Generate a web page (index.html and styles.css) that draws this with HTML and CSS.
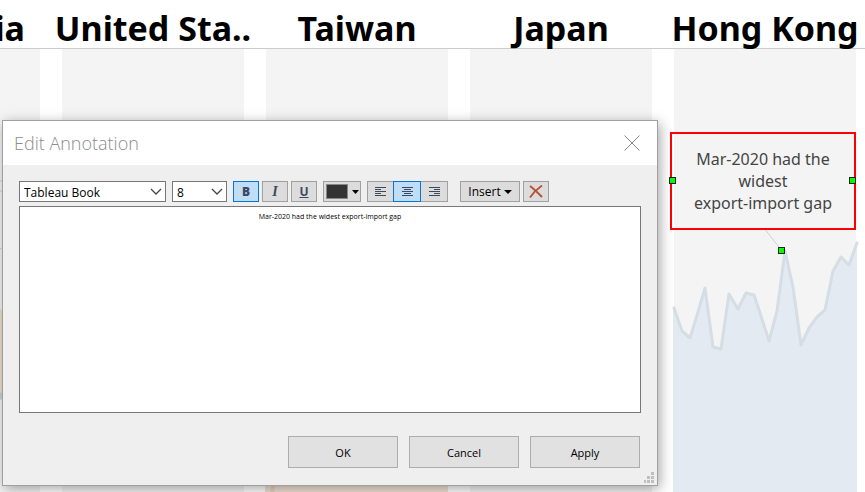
FILE: index.html
```html
<!DOCTYPE html>
<html lang="en">
<head>
<meta charset="utf-8">
<title>Edit Annotation</title>
<link rel="stylesheet" href="styles.css">
</head>
<body>
<main class="sheet">
  <header class="headers">
    <span class="header header-cut">ia</span>
    <span class="header">United Sta..</span>
    <span class="header">Taiwan</span>
    <span class="header">Japan</span>
    <span class="header">Hong Kong</span>
  </header>
  <div class="panes">
    <div class="pane">
      <svg class="chart" viewBox="0 0 40 443" preserveAspectRatio="none" aria-hidden="true">
        <path d="M0 259L4 264V346H0Z" fill="#f1dfd0"/>
        <path d="M0 132H3V142H0M0 200L4 198" fill="none" stroke="#cfcfcf"/>
        <path d="M0 347H4" stroke="#c8d4e0" stroke-width="7"/>
      </svg>
    </div>
    <div class="pane"></div>
    <div class="pane">
      <svg class="chart" viewBox="0 0 182 443" preserveAspectRatio="none" aria-hidden="true">
        <path d="M-1 430H182V443H-1Z" fill="#f1e1d3"/>
        <path d="M6 443L9 430" stroke="#e8d2c0" stroke-width="4"/>
      </svg>
    </div>
    <div class="pane"></div>
    <div class="pane">
      <svg class="chart" viewBox="0 0 182 443" preserveAspectRatio="none" aria-hidden="true">
        <path d="M-1 259L8 282L16 289L24 263L31 239L39 298L47 300L55 245L64 260L72 244L80 246L88 270L95 292L103 262L111 202L119 238L127 296L135 279L143 268L151 261L159 222L167 208L175 216L183 194V443H-1Z" fill="#e3eaf2"/>
        <path d="M0 259L8 282L16 289L24 263L31 239L39 298L47 300L55 245L64 260L72 244L80 246L88 270L95 292L103 262L111 202L119 238L127 296L135 279L143 268L151 261L159 222L167 208L175 216L183 194" fill="none" stroke="#d5dee5" stroke-width="3" stroke-linejoin="round" stroke-linecap="round"/>
        <path d="M90 179L108 202" stroke="#d0d0d0"/>
      </svg>
      <div class="note">
        <p class="note-text">Mar-2020 had the widest<br>export-import gap</p>
        <i class="handle handle-left"></i>
        <i class="handle handle-right"></i>
        <i class="handle handle-point"></i>
      </div>
    </div>
  </div>
</main>

<form class="dialog" role="dialog" aria-labelledby="dialog-title">
  <div class="titlebar">
    <h1 class="title" id="dialog-title">Edit Annotation</h1>
    <button class="close" type="button" aria-label="Close">
      <svg width="16" height="16" viewBox="0 0 16 16"><path d="M0.500 0.500L15.500 15.500M15.500 0.500L0.500 15.500" stroke="#888" fill="none"/></svg>
    </button>
  </div>
  <div class="body">
    <div class="toolbar">
      <span class="picker picker-font">
        <select class="select" aria-label="Font"><option>Tableau Book</option></select>
        <svg class="chevron" width="12" height="7" viewBox="0 0 12 7"><path d="M1 1L6 6L11 1" fill="none" stroke="#444" stroke-width="1.300"/></svg>
      </span>
      <span class="picker picker-size">
        <select class="select" aria-label="Font size"><option>8</option></select>
        <svg class="chevron" width="12" height="7" viewBox="0 0 12 7"><path d="M1 1L6 6L11 1" fill="none" stroke="#444" stroke-width="1.300"/></svg>
      </span>
      <div class="group">
        <button class="tool glyph active" type="button" aria-label="Bold" aria-pressed="true"><b>B</b></button>
        <button class="tool glyph" type="button" aria-label="Italic"><i class="italic">I</i></button>
        <button class="tool glyph" type="button" aria-label="Underline"><u>U</u></button>
      </div>
      <button class="tool color" type="button" aria-label="Text color">
        <span class="swatch"></span>
        <svg width="7" height="4" viewBox="0 0 7 4"><path d="M0 0H7L3.500 4Z"/></svg>
      </button>
      <div class="aligns">
        <button class="tool align" type="button" aria-label="Align left"><svg width="11" height="9" viewBox="0 0 11 9"><path d="M0 .5H11M0 2.500H6M0 4.500H11M0 6.500H6M0 8.500H11" stroke="#3b4a60"/></svg></button>
        <button class="tool align active" type="button" aria-label="Align center" aria-pressed="true"><svg width="11" height="9" viewBox="0 0 11 9"><path d="M0 .5H11M2 2.500H9M0 4.500H11M2 6.500H9M0 8.500H11" stroke="#3b4a60"/></svg></button>
        <button class="tool align" type="button" aria-label="Align right"><svg width="11" height="9" viewBox="0 0 11 9"><path d="M0 .5H11M5 2.500H11M0 4.500H11M5 6.500H11M0 8.500H11" stroke="#3b4a60"/></svg></button>
      </div>
      <div class="group inserts">
        <button class="tool insert" type="button">Insert <svg width="8" height="4" viewBox="0 0 8 4"><path d="M0 0H8L4 4Z"/></svg></button>
        <button class="tool glyph" type="button" aria-label="Clear"><svg width="14" height="13" viewBox="0 0 14 13"><path d="M1 1C5 4 9 8 13 12" fill="none" stroke="#b5533a" stroke-width="2"/><path d="M13 0.500C8 4 4 8 1 12.500" fill="none" stroke="#b5533a" stroke-width="1.800"/></svg></button>
      </div>
    </div>
    <textarea class="editor" aria-label="Annotation text" spellcheck="false">Mar-2020 had the widest export-import gap</textarea>
    <div class="actions">
      <button class="action" type="button">OK</button>
      <button class="action" type="button">Cancel</button>
      <button class="action" type="button">Apply</button>
    </div>
  </div>
  <svg class="grip" width="10" height="11" viewBox="0 0 10 11" aria-hidden="true"><path d="M7 0h3v3h-3zM3 4h3v3h-3zM7 4h3v3h-3zM0 8h2v3h-2zM3 8h3v3h-3zM7 8h3v3h-3z" fill="#bfbfbf"/></svg>
</form>
</body>
</html>
```
FILE: styles.css
```css
* { box-sizing: border-box; }

body {
  margin: 0;
  background: #fff;
  color: #000;
  font-family: "Open Sans", "Noto Sans", sans-serif;
  overflow: hidden;
}

button, select, textarea { font-family: inherit; color: inherit; margin: 0; }

.sheet { display: flex; flex-direction: column; height: 100vh; }

.headers, .panes {
  display: grid;
  grid-template-columns: 40px repeat(4, minmax(0, 1fr));
  column-gap: 22px;
  padding-right: 9px;
}

.headers { height: 49px; border-bottom: 1px solid #ccc; }

.header {
  display: flex;
  justify-content: center;
  font-family: "Noto Sans", sans-serif;
  font-size: 34px;
  font-weight: 700;
  line-height: 56px;
  white-space: nowrap;
}

.header-cut { justify-content: flex-end; padding-right: 15px; }

.panes { flex: 1; }
.pane { position: relative; background: #f4f4f4; }
.chart { display: block; width: 100%; height: 443px; overflow: visible; }

.note {
  position: absolute;
  top: 83px;
  left: -4px;
  right: 0;
  height: 98px;
  display: flex;
  align-items: center;
  justify-content: center;
  border: 2px solid #f00;
}

.note-text {
  width: 144px;
  margin: 0;
  color: #444;
  font-family: "Noto Sans", sans-serif;
  font-size: 16px;
  line-height: 22px;
  text-align: center;
}

.handle {
  position: absolute;
  width: 7px;
  height: 7px;
  background: #0f0;
  border: 1px solid #222;
}

.handle-left { left: -3px; top: 43px; }
.handle-right { right: -2px; top: 43px; }
.handle-point { left: 106px; top: 113px; }

.dialog {
  position: absolute;
  top: 120px;
  left: 2px;
  right: 207px;
  background: #efefef;
  border: 1px solid #a0a0a0;
  box-shadow: 2px 3px 12px rgba(0, 0, 0, 0.35);
}

.titlebar {
  display: flex;
  align-items: center;
  justify-content: space-between;
  height: 44px;
  padding: 0 17px 0 11px;
  background: #fff;
}

.title { margin: 0; color: #8c8c8c; font-size: 18px; font-weight: 300; }
.close { display: flex; padding: 0; border: 0; background: none; }
.body { padding: 16px 16px 17px; }
.toolbar { display: flex; gap: 6px; margin-bottom: 4px; }

.picker { position: relative; display: flex; height: 21px; }
.picker-font { width: 147px; }
.picker-size { width: 55px; }

.select {
  appearance: none;
  width: 100%;
  padding: 1px 4px 0;
  border: 1px solid #777;
  border-radius: 0;
  background: #fff;
  font-size: 12px;
}

.chevron { position: absolute; right: 4px; top: 7px; pointer-events: none; }
.group { display: flex; gap: 3px; }

.tool {
  display: flex;
  align-items: center;
  justify-content: center;
  height: 21px;
  padding: 0;
  border: 1px solid #a0a0a0;
  background: #dcdcdc;
}

.glyph { width: 26px; color: #3b4a60; font-size: 12px; font-weight: 700; }
.italic { font-family: "Liberation Serif", serif; font-size: 14px; }
.active { border-color: #0078d7; background: #bfddf5; position: relative; }
.color { width: 38px; gap: 4px; }
.swatch { width: 22px; height: 15px; border: 1px solid #888; background: #333; }
.aligns { display: flex; }
.align { width: 27px; }
.align + .align { margin-left: -1px; width: 28px; }
.inserts { margin-left: 6px; }
.insert { width: 60px; gap: 3px; font-size: 12px; }

.editor {
  display: block;
  width: 100%;
  height: 207px;
  padding: 4px;
  border: 1px solid #777;
  background: #fff;
  font-size: 7px;
  line-height: 12px;
  text-align: center;
  resize: none;
}

.actions { display: flex; justify-content: flex-end; gap: 11px; margin: 23px 1px 0 0; }

.action {
  width: 110px;
  height: 32px;
  padding: 0;
  border: 1px solid #adadad;
  background: #e1e1e1;
  font-size: 11px;
}

.grip { position: absolute; right: 3px; bottom: 2px; }
```
